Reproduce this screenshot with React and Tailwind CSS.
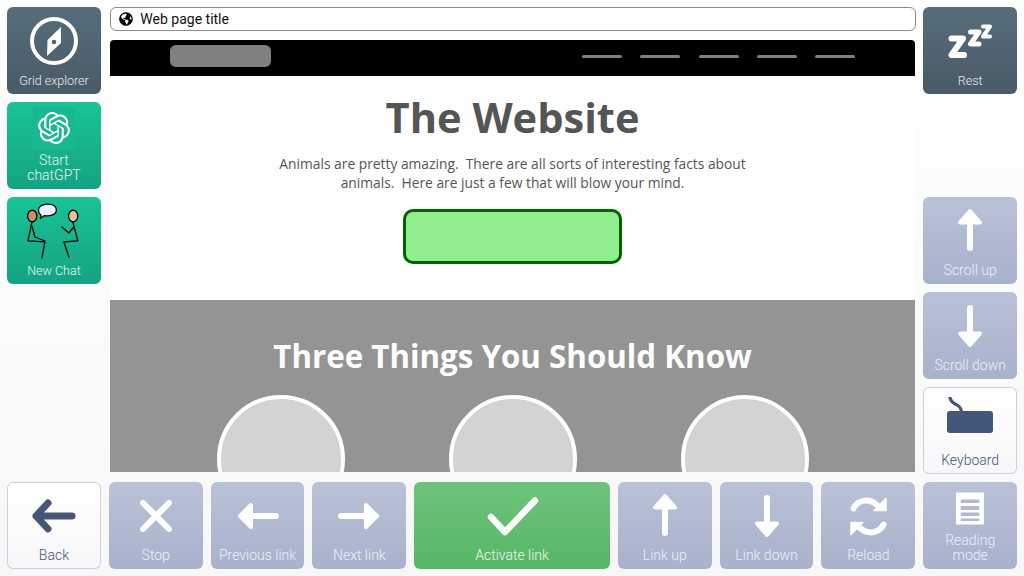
import { FaGlobeAmericas } from "react-icons/fa";
import { SiOpenai } from "react-icons/si";

const tones = {
  slate: "bg-gradient-to-b from-[#566d7a] to-[#4a5a67] text-[#e9edf0]",
  teal: "bg-gradient-to-b from-[#19c497] to-[#14a382] text-[#e6f7f2]",
  blue: "bg-gradient-to-b from-[#bac1d7] to-[#a8b2cb] text-[#eef0f6]",
  green: "bg-gradient-to-b from-[#6ec47c] to-[#56b765] text-[#eef8f0]",
  white: "bg-gradient-to-b from-white to-[#f7f7f9] shadow-[inset_0_0_0_1px_#c9d0e4] text-[#44567a]",
};

// tile used all over the grid: icon on top, label pinned to the bottom
const Tile = ({ label, tone, place = "", children, twoLine = false, small = false }) => (
  <div className={`relative rounded-[6px] flex flex-col items-center overflow-hidden ${tones[tone]} ${place}`}>
    <div className="h-[67px] w-full flex items-center justify-center shrink-0">{children}</div>
    <div
      className={`absolute left-0 right-0 bottom-[6px] text-center leading-[15px] ${small ? "text-[12.5px]" : "text-[14px]"} ${
        twoLine ? "" : "whitespace-nowrap"
      }`}
      style={{ fontFamily: "Roboto, sans-serif", fontWeight: 300 }}
    >
      {label}
    </div>
  </div>
);

const Svg = ({ children, w = 48, h = 48, color = "#fff" }) => (
  <svg width={w} height={h} viewBox={`0 0 ${w} ${h}`} fill="none" stroke={color} strokeLinecap="round" strokeLinejoin="round">
    {children}
  </svg>
);

const Compass = () => (
  <Svg>
    <circle cx="24" cy="24" r="22" strokeWidth="4" />
    <path d="M31 10 L17.5 23 L17 39 L31 26 Z" fill="#fff" stroke="none" />
    <circle cx="24" cy="25" r="2.2" fill="#4f6270" stroke="none" />
  </Svg>
);

const Zzz = () => (
  <Svg>
    <path d="M5.5 21.5 H17 L5.5 38 H18" strokeWidth="6" />
    <path d="M24.5 15 H33 L24.5 27 H33" strokeWidth="5" />
    <path d="M37 9.5 H44 L37 19.5 H44" strokeWidth="4" />
  </Svg>
);

const People = () => (
  <svg width="94" height="67" viewBox="7 197 94 67" fill="none" stroke="#000" strokeWidth="1.3" strokeLinecap="round" strokeLinejoin="round">
    <path d="M41 215 L40.5 218.5 L44.5 215.5 C50 216.5 56.5 214.5 56.5 210 C56.5 206 52.5 204 47.5 204 C42.5 204 38.5 206.5 38.5 210 C38.5 212 39.5 214 41 215 Z" fill="#eef4fc" />
    <ellipse cx="32.3" cy="216" rx="4.6" ry="5.8" fill="#c8915f" />
    <ellipse cx="73.3" cy="216" rx="4.6" ry="5.8" fill="#e2c3a3" />
    <path d="M32 222 L28 241 L45 242 L42 258" />
    <path d="M32 226 L35 237 L45 241" />
    <path d="M73 222 L78 241 L64 242 L69 257" />
    <path d="M74 227 L69 233 L62 227" />
  </svg>
);

const ArrowX = ({ color = "#fff" }) => (
  <Svg color={color}>
    <path d="M11 11 L37 37 M37 11 L11 37" strokeWidth="6" />
  </Svg>
);

const BackArrow = () => (
  <Svg color="#465678">
    <path d="M18 11 L6 24 L18 37 M6 24 H42" strokeWidth="7" />
  </Svg>
);

const ArrowLeft = () => (
  <Svg>
    <path d="M6 24 L17 13 V35 Z" fill="#fff" strokeWidth="4" />
    <path d="M17 24 H42" strokeWidth="6" />
  </Svg>
);

const ArrowRight = () => (
  <Svg>
    <path d="M42 24 L31 13 V35 Z" fill="#fff" strokeWidth="4" />
    <path d="M6 24 H31" strokeWidth="6" />
  </Svg>
);

const ArrowUp = () => (
  <Svg>
    <path d="M24 4 L14 15.5 H34 Z" fill="#fff" strokeWidth="4" />
    <path d="M24 15 V41" strokeWidth="6" />
  </Svg>
);

const ArrowDown = () => (
  <Svg>
    <path d="M24 43 L14 31.5 H34 Z" fill="#fff" strokeWidth="4" />
    <path d="M24 6 V32" strokeWidth="6" />
  </Svg>
);

const Check = () => (
  <Svg w={64}>
    <path d="M11 25 L25 40 L55 8.5" strokeWidth="6.5" />
  </Svg>
);

const Reload = () => (
  <Svg>
    <path d="M9.5 16.5 C13 9 24 5 33 13" strokeWidth="6" />
    <path d="M42 6.5 V18.5 H30 Z" fill="#fff" stroke="#fff" strokeWidth="1.5" />
    <path d="M39.5 32.5 C36 40 25 44 16 36" strokeWidth="6" />
    <path d="M7 42.5 V30.5 H19 Z" fill="#fff" stroke="#fff" strokeWidth="1.5" />
  </Svg>
);

const ReadingMode = () => (
  <svg width="48" height="48" viewBox="0 0 48 48">
    <rect x="10" y="0.5" width="28" height="32" fill="#fff" />
    <path d="M14.7 7.5 H33.3 V11 H14.7 Z M14.7 14 H33.3 V18 H14.7 Z M14.7 20.5 H33.3 V24 H14.7 Z M14.7 26.5 H33.3 V29 H14.7 Z" fill="#b2bad2" />
  </svg>
);

const KeyboardIcon = () => (
  <svg width="48" height="48" viewBox="0 0 48 48">
    <path d="M4 1 C6 9 15 6 15.5 15" fill="none" stroke="#44567a" strokeWidth="3.2" strokeLinecap="round" />
    <rect x="1" y="14" width="46" height="22" rx="3" fill="#44567a" />
  </svg>
);

const NavDash = () => <div className="w-10 h-[3px] rounded-full bg-[#808080]" />;

const Circle = () => (
  <div className="w-32 h-32 rounded-full shrink-0 bg-[#d3d3d3] border-4 border-white" />
);

const Website = () => (
  <div className="flex-1 min-h-0 overflow-hidden flex flex-col" style={{ fontFamily: "'Open Sans', sans-serif" }}>
    <div className="h-9 shrink-0 bg-black rounded-t-[4px] flex items-center justify-between pl-[60px] pr-[60px]">
      <div className="w-[101px] h-[22px] rounded-[6px] bg-[#808080] -mt-[4px]" />
      <div className="flex gap-[18.3px] -mt-[4px]">
        <NavDash />
        <NavDash />
        <NavDash />
        <NavDash />
        <NavDash />
      </div>
    </div>
    <div className="h-56 shrink-0 bg-white flex flex-col items-center">
      <h1 className="mt-[14px] text-[41.6px] leading-[54px] font-bold text-[#555555]">The Website</h1>
      <p className="mt-[10px] text-[13.8px] leading-[19px] text-center whitespace-pre text-[#555555]">
        {"Animals are pretty amazing.  There are all sorts of interesting facts about\nanimals.  Here are just a few that will blow your mind."}
      </p>
      <div className="mt-[17px] w-[219px] h-[55px] rounded-[10px] bg-[#90ee90] border-[3px] border-[#006400]" />
    </div>
    <div className="flex-1 min-h-0 bg-[#949494] flex flex-col items-center overflow-hidden">
      <h2 className="mt-[34px] text-[31.3px] leading-[44px] font-bold text-white">Three Things You Should Know</h2>
      <div className="mt-[17px] flex gap-[104px]">
        <Circle />
        <Circle />
        <Circle />
      </div>
    </div>
  </div>
);

export default function App() {
  return (
    <div className="w-screen h-screen bg-gradient-to-b from-white to-[#f7f7f7] pl-[7.05px] pr-[6.95px] py-[7px] grid grid-cols-10 grid-rows-6 gap-2">
      <Tile label="Grid explorer" tone="slate" small place="col-start-1 row-start-1">
        <Compass />
      </Tile>
      <div className="col-start-2 col-span-8 row-start-1 row-span-5 flex flex-col pl-[1px] pb-[2px]">
        <div className="h-6 shrink-0 -mr-[0.6px] bg-white border border-[#8c8c8c] rounded-[6px] flex items-center pl-[8px] gap-[7.5px]">
          <FaGlobeAmericas className="text-[14px] text-black" />
          <span className="text-[14px] text-[#111]" style={{ fontFamily: "Roboto, sans-serif" }}>
            Web page title
          </span>
        </div>
        <div className="h-[9px] shrink-0" />
        <Website />
      </div>
      <Tile label="Rest" tone="slate" small place="col-start-10 row-start-1">
        <Zzz />
      </Tile>

      <Tile label={<>Start<br />chatGPT</>} tone="teal" twoLine place="col-start-1 row-start-2">
        <div className="-mt-[15px] w-[42px] h-[43px] bg-[#18b892] flex items-center justify-center">
          <SiOpenai className="text-[32px] text-white" />
        </div>
      </Tile>
      <Tile label="New Chat" tone="teal" small place="col-start-1 row-start-3">
        <People />
      </Tile>

      <Tile label="Scroll up" tone="blue" place="col-start-10 row-start-3">
        <ArrowUp />
      </Tile>
      <Tile label="Scroll down" tone="blue" place="col-start-10 row-start-4">
        <ArrowDown />
      </Tile>
      <Tile label="Keyboard" tone="white" place="col-start-10 row-start-5">
        <KeyboardIcon />
      </Tile>

      <Tile label="Back" tone="white" place="col-start-1 row-start-6">
        <BackArrow />
      </Tile>
      <Tile label="Stop" tone="blue" place="row-start-6">
        <ArrowX />
      </Tile>
      <Tile label="Previous link" tone="blue" place="row-start-6">
        <ArrowLeft />
      </Tile>
      <Tile label="Next link" tone="blue" place="row-start-6">
        <ArrowRight />
      </Tile>
      <Tile label="Activate link" tone="green" place="col-span-2 row-start-6">
        <Check />
      </Tile>
      <Tile label="Link up" tone="blue" place="row-start-6">
        <ArrowUp />
      </Tile>
      <Tile label="Link down" tone="blue" place="row-start-6">
        <ArrowDown />
      </Tile>
      <Tile label="Reload" tone="blue" place="row-start-6">
        <Reload />
      </Tile>
      <Tile label={<>Reading<br />mode</>} tone="blue" twoLine place="row-start-6">
        <ReadingMode />
      </Tile>
    </div>
  );
}
